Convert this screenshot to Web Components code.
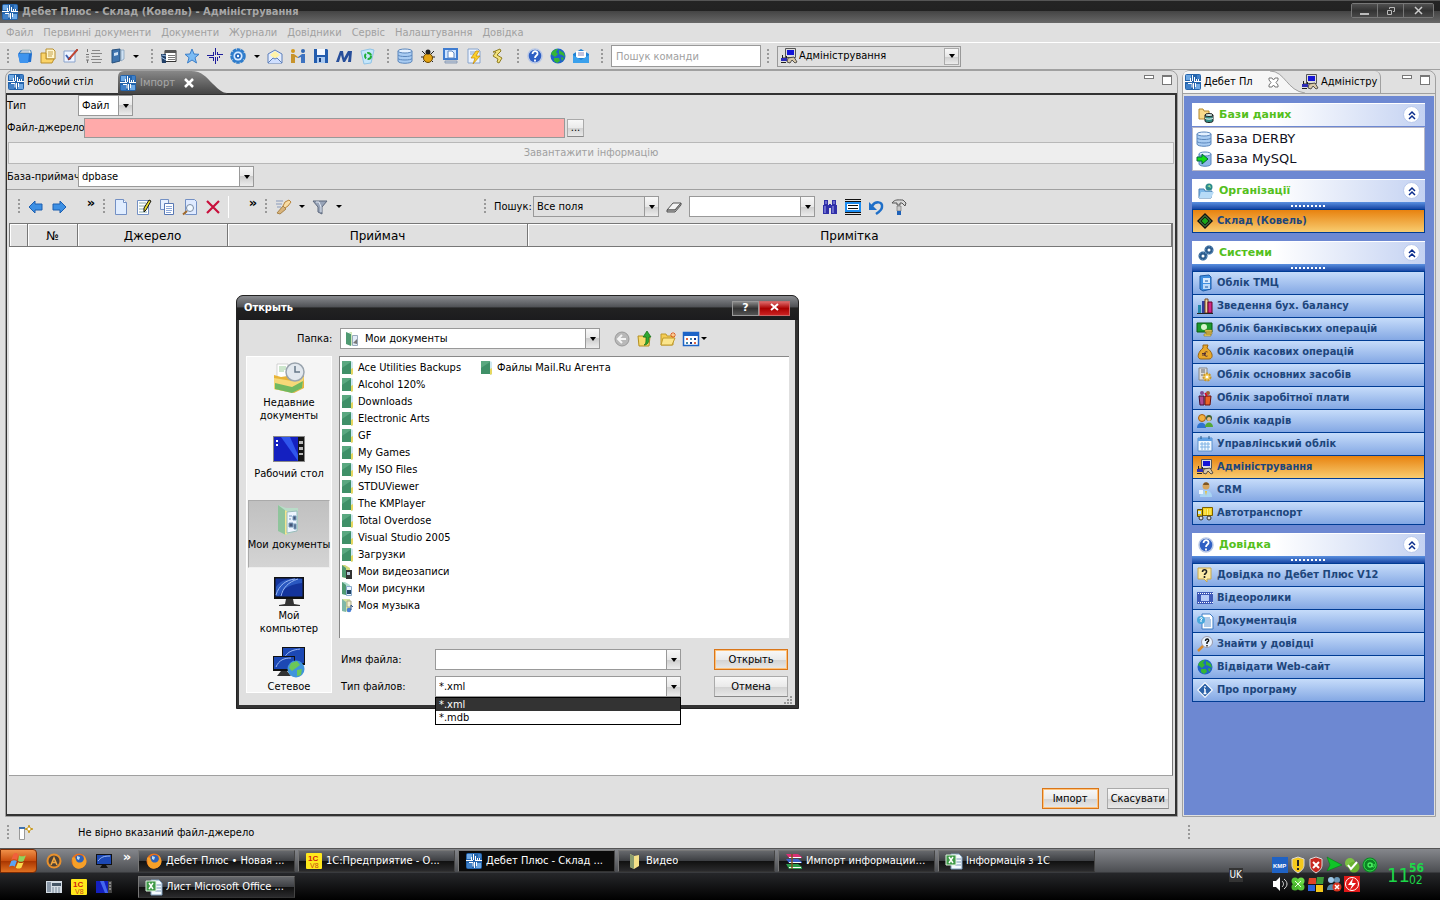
<!DOCTYPE html>
<html lang="uk">
<head>
<meta charset="utf-8">
<title>Дебет Плюс - Склад (Ковель) - Адміністрування</title>
<style>
  html { height: 100%; }
  body {
    margin: 0;
    min-height: 100%;
    display: flex;
    flex-direction: column;
    background: #e0e0e0;
    color: #000;
    font: 11px/14px "DejaVu Sans Condensed", "Noto Sans", sans-serif;
    --wide: "DejaVu Sans", sans-serif;
    --line: #a0a0a0;
    --face: #e0e0e0;
  }
  app-shell { flex: 1; }
</style>
</head>
<body>
<app-shell></app-shell>

<script>
const ICONS = {
  logo: `<rect width="16" height="16" rx="2" fill="#2464ac"/><path d="M1 1h5v5H1zM10 10h5v5h-5z" fill="#6fa9e4"/><path d="M1 10h5v5H1zM12 1h3v4h-3z" fill="#3f80c8"/><path d="M7.500 1v6M5.500 4v3M0 7.500h7M8.500 9v6M10.500 9v4M9 7.500h7M9.500 3v4M11.500 5v2M13.500 5v2M3 9.500h4v4" stroke="#fff" fill="none"/>`,
  box: `<path d="M1 6l3-4h10l1 4-1 8-11 1z" fill="#1f6fd0"/><path d="M1 6h11l-1 9H3z" fill="#3f94ee"/><path d="M3 5l2-3h8l1 3z" fill="#e8eef6" stroke="#8aa" stroke-width=".6"/><path d="M5 2v3M7 2v3M9 2v3M11 2v3" stroke="#7c93b4" stroke-width=".7"/>`,
  notes: `<path d="M6 1h7l2 2v8H6z" fill="#fff6cf" stroke="#b98f2c"/><path d="M8 4h5M8 6h5M8 8h4" stroke="#c5a24c"/><path d="M1 5h5v6h8l-2 4H1z" fill="#fbd468" stroke="#b98f2c"/>`,
  pencilPad: `<path d="M1 3h11v11H1z" fill="#eef4ff" stroke="#8aa3cc"/><path d="M3 7l3 4 2-1" stroke="#3f64b4" stroke-width="2" fill="none"/><path d="M14 1l1 1-8 9-2 1 1-2z" fill="#d8432d" stroke="#8f2312" stroke-width=".6"/>`,
  list: `<path d="M1.500 1v3M0 6.500h3M0 9h3M0 12h3M1.500 12v3" stroke="#777"/><path d="M6 2.500h8M5 5.500h11M6 8.500h8M5 11.500h11M6 14.500h9" stroke="#888"/>`,
  book: `<path d="M3 2l8-1v12l-8 2z" fill="#3f74ae" stroke="#27507c"/><path d="M5 5l4-1v3l-4 1z" fill="#cfe2f5"/><path d="M12 2h3v9l-3 2z" fill="#cfe2f5" stroke="#7a98b6" stroke-width=".7"/>`,
  grid: `<path d="M4 2.500h11v11H4z" fill="#fff" stroke="#333"/><path d="M4 2h11v3H4z" fill="#555"/><path d="M7 7.500h7M7 9.500h7M7 11.500h7" stroke="#777"/><path d="M0 6h5v9H1z" fill="#223f66"/><path d="M0 9l5 3M1 7l4 1" stroke="#9bc0e8"/>`,
  star: `<path d="M8 1l2 5 5 .3-4 3.400 1.500 5.300L8 12l-4.500 3L5 9.700 1 6.300 6 6z" fill="#7cbcf4" stroke="#3d7fc8"/>`,
  cross: `<path d="M8.500 0v7M6.500 4v3M0 7.500h7M10.500 4v3M10 6.500h6M8.500 9v7M6.500 10v3M2 9.500h5M10.500 9v4M12.500 8v2" stroke="#1c1c9c" fill="none"/>`,
  gear: `<circle cx="8" cy="8" r="6.500" fill="#3a86d6" stroke="#2f7cca" stroke-width="2.500" stroke-dasharray="3.500 .6"/><circle cx="8" cy="8" r="4.500" fill="#d6eaff"/><circle cx="8" cy="8" r="2.800" fill="#1e62b8"/><circle cx="8" cy="8" r="1.200" fill="#fff"/>`,
  mail: `<path d="M1 6l7-4 7 4v9H1z" fill="#e3edff" stroke="#5d7fb9"/><path d="M3 7l5-4 5 4-5 4z" fill="#fff3a8"/><path d="M1 15l5-5 2 1 2-1 5 5" fill="#cfdfff" stroke="#5d7fb9"/>`,
  people: `<circle cx="3" cy="3" r="2" fill="#d49a1e"/><circle cx="13" cy="3" r="2" fill="#2f66b4"/><path d="M1 6h3l4 3v1l-3-1v6H1z" fill="#c8942c"/><path d="M15 6h-3L8 9v1l3-1v6h4z" fill="#3d72c0"/>`,
  save: `<path d="M1 1h13l1 1v13H1z" fill="#235cae"/><path d="M4 1h8v6H4z" fill="#f4f8ff"/><path d="M4 9h8v6H4z" fill="#a8c8f0"/><path d="M6 10h2v4H6z" fill="#183f80"/>`,
  emm: `<path d="M0 14l4-11h3l1 7 4-7h4l-1 11h-3l1-7-4 7H7L5 7l-2 7z" fill="#274e9a"/>`,
  recycle: `<path d="M2 3l9-2 4 1-3 13-7 1z" fill="#c4e6fb" stroke="#8fc3e6"/><circle cx="9" cy="8" r="3" fill="none" stroke="#1fae36" stroke-width="2" stroke-dasharray="5 1.500"/>`,
  db: `<path d="M1 3v10c0 3 14 3 14 0V3z" fill="#a9ccf2" stroke="#5a86bc"/><ellipse cx="8" cy="3" rx="7" ry="2" fill="#e4f1ff" stroke="#5a86bc"/><path d="M1 7c1 2 13 2 14 0M1 10.500c1 2 13 2 14 0" stroke="#5a86bc" fill="none"/>`,
  bug: `<path d="M2 3l3 3M14 3l-3 3M1 9h3M15 9h-3M3 14l2-2M13 14l-2-2" stroke="#222"/><ellipse cx="8" cy="10" rx="4.500" ry="4.500" fill="#e4a414" stroke="#6b4700"/><circle cx="8" cy="4" r="2.500" fill="#222"/>`,
  screen: `<path d="M1 1h13v10H1z" fill="#cfe4ff" stroke="#3f7cd0" stroke-width="2"/><path d="M5 3h4l2 2v5H5z" fill="#fff" stroke="#5b86c4"/><path d="M2 13h12v2H2z" fill="#c4d0e0" stroke="#8c9cb4"/>`,
  flashDoc: `<path d="M2 1h10l2 2v12H2z" fill="#eaf2ff" stroke="#88a4cc"/><path d="M4 4h7M4 6h7" stroke="#88a4cc"/><path d="M10 3L5 10h4l-2 6 7-8h-4l3-5z" fill="#fbd12c" stroke="#c48a0a" stroke-width=".7"/>`,
  scroll: `<path d="M4 4l7-3 1 2-4 4 5 3-3 5-2-1 1-3-5-3 3-4z" fill="#f3e27c" stroke="#8f7d22"/>`,
  help: `<circle cx="8" cy="8" r="7" fill="#2f5fc4" stroke="#b9c8e6" stroke-width="1.500"/><path d="M5.500 6c0-4 5.500-3.500 5 0-.3 1.600-2.500 1.500-2.500 4M8 11.500v2" stroke="#fff" stroke-width="1.800" fill="none"/>`,
  globe: `<circle cx="8" cy="8" r="7.500" fill="#1f62c8"/><path d="M1 6c2-5 6-5 7-5l-2 3 2 2-3 3zM9 2l5 3 1 4-3-2-3-1zM4 10l5 0 1 3-3 2-3-2zM11 9l3 1-2 3z" fill="#35b535"/>`,
  mailDoc: `<path d="M0 6l8-5 8 5v9H0z" fill="#1f82d4"/><path d="M3 3h10v7H3z" fill="#fff"/><path d="M5 5h6M5 7h6" stroke="#88b"/><path d="M0 7l8 5 8-5v8H0z" fill="#3aa0ec"/>`,
  admin: `<path d="M4.500.500h10v9h-10z" fill="#ddd" stroke="#555"/><path d="M6 2h7v5H6z" fill="#1414d6"/><path d="M1.500 7v3h4v-2" stroke="#222" fill="none"/><path d="M0 10h6v3H0z" fill="#2c2cb4"/><path d="M7 10l6-1 3 5-2 1-3-3-2 3-3-1z" fill="#d8c8a8" stroke="#333" stroke-width=".8"/><path d="M0 14.500h5" stroke="#222"/>`,
  back: `<path d="M1 8l6-6v3h7v6H7v3z" fill="#3d90e4" stroke="#1c5fb0"/>`,
  forward: `<path d="M15 8L9 2v3H2v6h7v3z" fill="#3d90e4" stroke="#1c5fb0"/>`,
  page: `<path d="M2.500.5h8l3 3v12h-11z" fill="#e0edff" stroke="#7390c4"/><path d="M10.500.5v3h3" fill="#fff" stroke="#7390c4"/>`,
  edit: `<path d="M1.500 1.500h11v14h-11z" fill="#fff" stroke="#7390c4"/><path d="M3 4h7M3 7h6M3 10h7M3 13h8" stroke="#8aa"/><path d="M13 1l2 1-5 9-2 2V9z" fill="#eadf2c" stroke="#111"/>`,
  copy: `<path d="M1.500.5h8v10h-8z" fill="#e8f1ff" stroke="#7390c4"/><path d="M5.500 4.500h9v11h-9z" fill="#fff" stroke="#5878b4"/><path d="M7 7.500h6M7 9.500h6M7 11.500h6M7 13.500h5" stroke="#8aa6d8"/>`,
  preview: `<path d="M3.500.5h9l2 2v13h-11z" fill="#dfeaff" stroke="#7390c4"/><circle cx="8" cy="9" r="3.500" fill="#f2f9ff" stroke="#7a8ba4"/><path d="M5 12l-4 3.500" stroke="#a06a2c" stroke-width="2"/>`,
  del: `<path d="M2 2l12 12M14 2L2 14" stroke="#c8103c" stroke-width="2.200"/>`,
  torch: `<path d="M10 3l4-2 2 2-3 4-3 2-2-2z" fill="#f8dca4" stroke="#b8843c"/><path d="M8 7l3 3-6 5-3-1z" fill="#d9b47c" stroke="#a7834a"/><path d="M1 2h7M1 5h6M2 8h4" stroke="#8899bb"/>`,
  filter: `<path d="M1 2h14l-5 6v7l-4-2V8z" fill="#98a4b8" stroke="#5d687c"/><path d="M4 3h3l2 5v5" stroke="#e4eaf4" fill="none"/>`,
  eraser: `<path d="M1 11l6-7h8l-6 7z" fill="#f4f4f4" stroke="#555"/><path d="M1 11v2h8l6-7V4l-6 7z" fill="#bbb" stroke="#555"/>`,
  find: `<path d="M2 1h4v5H2zM10 1h4v5h-4zM1 6h6v9H1zM9 6h6v9H9zM7 5h2v4H7z" fill="#3030a8"/><path d="M3 7v7M11 7v7M4 2v3M12 2v3" stroke="#a8a8f4"/>`,
  rows: `<path d="M0 .500h16M0 15.500h16" stroke="#111"/><path d="M1 4h14v8H1z" fill="#fff" stroke="#1c8cf0" stroke-width="2"/><path d="M0 2.500h16M0 13.500h16M3 6.500h10M3 9.500h10" stroke="#111"/>`,
  undo: `<path d="M4 7c3-5 11-5 10 1 0 3-3 5-6 7" stroke="#1f6fc8" stroke-width="2.500" fill="none"/><path d="M1 3v8h8z" fill="#1f6fc8"/>`,
  hammer: `<path d="M1 4c3-4 6-3 11-3l3 3-1 3-3-3H9v2H6V4z" fill="#d8d8d8" stroke="#555"/><path d="M6 7h4v5H6z" fill="#ccc" stroke="#666" stroke-width=".6"/><path d="M6 12h4v4H6z" fill="#1f62b8"/>`,
  bases: `<path d="M1 2h4l1 2h5v8H1z" fill="#f8d98a" stroke="#b38728"/><path d="M7 8v6c0 2 8 2 8 0V8z" fill="#2f8f86" stroke="#222"/><ellipse cx="11" cy="8" rx="4" ry="1.500" fill="#d6f2ee" stroke="#222"/><path d="M7 11c1 1.500 7 1.500 8 0" stroke="#fff" fill="none"/>`,
  dbArrow: `<path d="M3 3v10c0 3 12 3 12 0V3z" fill="#8db8e8" stroke="#5a86bc"/><ellipse cx="9" cy="3" rx="6" ry="2" fill="#e4f1ff" stroke="#5a86bc"/><path d="M1 6h5V3l6 5-6 5v-3H1z" fill="#16dd16" stroke="#064"/>`,
  orgs: `<path d="M1 6h5l1 2h7l-1 7H1z" fill="#7db8e8" stroke="#4a7fb0"/><path d="M3 9h13l-3 6H1z" fill="#b7dbf7"/><circle cx="11" cy="4" r="3.500" fill="#2a8a8a"/><path d="M9 3l3-1 1 3z" fill="#9fe0a0"/>`,
  diamond: `<path d="M8 0l8 8-8 8-8-8z" fill="#111"/><path d="M8 2.500L13.500 8 8 13.500 2.500 8z" fill="none" stroke="#5a5"/><path d="M8 4.500L11.500 8 8 11.500 4.500 8z" fill="#18a818"/>`,
  gears: `<circle cx="5" cy="11" r="3" fill="none" stroke="#2d5c8c" stroke-width="3"/><circle cx="11" cy="5" r="3" fill="none" stroke="#2d5c8c" stroke-width="3"/><circle cx="5" cy="11" r="4" fill="none" stroke="#7fb0dc" stroke-dasharray="1.500 1.500"/><circle cx="11" cy="5" r="4" fill="none" stroke="#7fb0dc" stroke-dasharray="1.500 1.500"/>`,
  cabinet: `<path d="M3 1l9-1 2 2v12l-8 2-3-2z" fill="#3f8fe0" stroke="#1b5aa8"/><path d="M6 3h7v5H6z" fill="#d8ebff"/><path d="M6 9h7v5H6z" fill="#bcd9f8"/><path d="M8 6h3M8 12h3" stroke="#1b5aa8"/>`,
  chart: `<path d="M1 7h3v8H1z" fill="#28a" /><path d="M5 3h3v12H5z" fill="#323c9c"/><path d="M8 1h3v14H8z" fill="#f0d8a0" stroke="#742"/><path d="M11 4h4v11h-4z" fill="#d02a8a" stroke="#602"/><path d="M0 15.500h16" stroke="#222"/>`,
  money: `<path d="M0 2h15v9H0z" fill="#1c9a2c" stroke="#0a5a14"/><circle cx="7" cy="6" r="3" fill="#d8f4cc"/><path d="M8 9h7v2H8zM9 11h6v2H9zM7 13h7v2H7z" fill="#f4dc70" stroke="#8a6c10" stroke-width=".6"/>`,
  bag: `<path d="M6 1h5l-1 3c7 5 6 11 2 11H4C0 15 0 9 6 4z" fill="#e8a82c" stroke="#9a6410"/><path d="M10.500 8c-4-2-4 6 0 4M5 9.500h4M5 11h4" stroke="#533" fill="none"/>`,
  assets: `<path d="M2 1h8v12H2z" fill="#ddd" stroke="#888"/><path d="M4 3h4M4 5h4M4 8h2" stroke="#666"/><circle cx="10" cy="10" r="3.500" fill="#f6cf62" stroke="#c9962a" stroke-width="2" stroke-dasharray="2 1"/><circle cx="10" cy="10" r="1.300" fill="#fff"/>`,
  salary: `<circle cx="5" cy="3" r="2" fill="#7a4a90"/><circle cx="11" cy="3" r="2" fill="#a06030"/><path d="M2 6h5v9H3z" fill="#b04890" stroke="#413"/><path d="M8 6h6l-1 9H8z" fill="#e86424" stroke="#611"/><path d="M8 3l2 3" stroke="#d02" stroke-width="1.500"/>`,
  staff: `<circle cx="5" cy="5" r="3.500" fill="#f0b040" stroke="#a45c10"/><circle cx="12" cy="5" r="3" fill="#3f6030"/><circle cx="12" cy="6" r="2" fill="#f0c080"/><path d="M0 15c0-7 9-7 9 0z" fill="#2f74d0"/><path d="M8 14c0-6 8-6 8 0z" fill="#54a838"/>`,
  calendar: `<path d="M1 2h14v13H1z" fill="#f2f9ff" stroke="#5a90cc"/><path d="M1 2h14v3H1z" fill="#5fa0e4"/><path d="M3 8h10M3 11h10M5 6v8M8 6v8M11 6v8" stroke="#7fb2e4"/><path d="M4 0v3M12 0v3" stroke="#24588c"/>`,
  crm: `<circle cx="9" cy="4" r="3.500" fill="#d6a45c"/><path d="M6 3c1-4 6-3 6 0z" fill="#7c5424"/><path d="M3 15c0-9 12-9 12 0z" fill="#a8d4f4"/><path d="M8 9l1 5 1-5z" fill="#e8c040"/><path d="M2 8h4v4H2z" fill="#e8f4ff"/>`,
  truck: `<path d="M5.500 2.500h10v8h-10z" fill="#f4d020" stroke="#7a6000"/><path d="M8 4v6M10.500 4v6M13 4v6" stroke="#fff27c"/><path d="M.500 4.500h5v7h-5z" fill="#e0bc10" stroke="#5a4800"/><path d="M1 6h3v3H1z" fill="#bfe4ff"/><circle cx="4" cy="13" r="2" fill="#ddd" stroke="#333"/><circle cx="12" cy="13" r="2" fill="#ddd" stroke="#333"/>`,
  note: `<path d="M1 1h13v11h-4v3l-3-3H1z" fill="#fbe9a6" stroke="#c9a84c"/><path d="M5.500 5c0-3 4.500-3 4 0 0 1.500-2 1.500-2 3M7.500 9v2" stroke="#222" stroke-width="1.600" fill="none"/>`,
  film: `<path d="M0 2h16v12H0z" fill="#3f5ab8"/><path d="M4 5h8v6H4z" fill="#b8ccf8"/><path d="M1 3.500h15M1 12.500h15" stroke="#fff" stroke-dasharray="1 1"/>`,
  docHelp: `<path d="M5 1h8l3 3v12H5z" fill="#fff" stroke="#3f7cc4"/><path d="M7 5h6M7 7h7M7 9h7M7 11h7M7 13h7" stroke="#5a94d4"/><circle cx="4" cy="7" r="4" fill="#4aa8dc"/><path d="M3 6c0-2 3-2 2 0L4 7v2" stroke="#fff" fill="none"/>`,
  search: `<circle cx="10" cy="6" r="5.500" fill="#eaf4ff" stroke="#99a"/><path d="M8.500 5c0-3 4-2.500 3 0l-1.500 1.500V8M10 9v1.500" stroke="#111" stroke-width="1.400" fill="none"/><path d="M6 10l-5 5" stroke="#d88a2c" stroke-width="2.500"/>`,
  info: `<path d="M8 0l8 8-8 8-8-8z" fill="#fff"/><path d="M8 1.500L14.500 8 8 14.500 1.500 8z" fill="#2c62a8"/><path d="M8 4v1.500M8 7v4M6.500 11.500h3M7 7h1" stroke="#fff" stroke-width="1.500"/>`,
  newView: `<path d="M2.500 2.500h5v12h-5z" fill="#fff" stroke="#999"/><path d="M2 2h6v2H2z" fill="#3f72ac"/><path d="M12 0l1 3 3 1-3 1-1 3-1-3-3-1 3-1z" fill="#fff" stroke="#c89a20"/>`,
  myDocs: `<path d="M2 1l5 2v12l-5-2z" fill="#4f9a72"/><path d="M5 1h3v13l-1 1V3z" fill="#cfe8b8"/><path d="M8.500 4.500h5v10h-5z" fill="#e3ecf8" stroke="#9ab"/><path d="M9 12l4-4v5z" fill="#777"/>`,
  goBack: `<circle cx="8" cy="8" r="7" fill="#b8b8b8" stroke="#999"/><path d="M4 8h8M8 4L4 8l4 4" stroke="#f4f4f4" stroke-width="2" fill="none"/>`,
  goUp: `<path d="M1 5h5l1 1h6l-1 9H2z" fill="#f6dc6c" stroke="#b48e20"/><path d="M7 14c2-1 2-3 2-8H6l4-6 4 6h-2c0 5-1 8-5 8z" fill="#2fa82f" stroke="#0f6a14" stroke-width=".7"/>`,
  newFolder: `<path d="M1 3h5l1 2h6v9H1z" fill="#f4cc54" stroke="#c09a2c"/><path d="M3 7h12l-3 7H1z" fill="#fbe58c" stroke="#c09a2c"/><path d="M13 1v6M10 4h6M11 2l4 4M15 2l-4 4" stroke="#e4601c"/><circle cx="13" cy="4" r="1.300" fill="#fc8"/>`,
  views: `<path d="M.5 1.500h15v13H.5z" fill="#fff" stroke="#1c64c8" stroke-width="1.500"/><path d="M0 1h16v4H0z" fill="#1c64c8"/><path d="M3 7h2v2H3zM11 11h2v2h-2z" fill="#d64"/><path d="M7 7h2v2H7zM3 11h2v2H3z" fill="#48a"/><path d="M11 7h2v2h-2zM7 11h2v2H7z" fill="#138"/>`,
  folder: `<path d="M2 1h9v13H2z" fill="#3f9068"/><path d="M2 1h9v1L2 8z" fill="#5aa880"/><path d="M11 1l2 1v13l-2-1z" fill="#cfe8f0"/><path d="M11 9l2-1v6l-2 1z" fill="#e6d860"/>`,
  folderVideo: `<path d="M2 1h3l5 3v11l-8-2z" fill="#d0d878"/><path d="M2 1l4 3v10l-4-1z" fill="#4f9a72"/><path d="M6 6h6v9H6z" fill="#333"/><path d="M7 8h3v3H7z" fill="#bcd"/>`,
  folderPics: `<path d="M2 1h3l5 3v11l-8-2z" fill="#b0dcd0"/><path d="M2 1l4 3v10l-4-1z" fill="#4f9a72"/><path d="M6.500 5.500h5v9h-5z" fill="#eaf4ff" stroke="#8ac"/><path d="M7 9h4v4H7z" fill="#246"/>`,
  folderMusic: `<path d="M2 1h8v13l-8-1z" fill="#d8e4a0"/><path d="M2 1l4 3v10l-4-1z" fill="#7fb8a8"/><path d="M7 3h4v6H7z" fill="#f4f0d0" stroke="#aa8"/><circle cx="9" cy="12" r="2.300" fill="#4a80d8"/><path d="M11 12V7l2 2" stroke="#358" fill="none"/>`,
  recent: `<path d="M4 2h11v14H4z" fill="#fff" stroke="#bbb" stroke-width=".6"/><path d="M6 5h7M6 7h7M6 9h5" stroke="#9c9"/><path d="M1 13l7 2 13-2 10-1v14l-10 5-20-4z" fill="#e8b438"/><path d="M1 16l18 3 12-4-2 11-10 5-18-4z" fill="#f5d878"/><path d="M2 21l17 4 11-6-1 7-10 5-17-4z" fill="#70b860"/><circle cx="22" cy="10" r="9" fill="#e2e8ee" stroke="#9aa4ae" stroke-width="1.500"/><path d="M22 4v6h5" stroke="#678" stroke-width="1.500" fill="none"/>`,
  desktop: `<path d="M0 3h32v26H0z" fill="#888"/><path d="M1 4h24v24H1z" fill="#1420c0"/><path d="M8 4h9l8 18v6z" fill="#2f55ec"/><path d="M3 7h2v2H3zM3 11h2v2H3z" fill="#fff"/><path d="M25 4h6v24h-6z" fill="#151515"/><path d="M26 8h4v3h-4zM26 14h4v3h-4zM26 20h4v2h-4z" fill="#bbb"/>`,
  docsBig: `<path d="M5 1l8 3h12v22l-11 5-9-4z" fill="#b9dcc8"/><path d="M5 1l8 6v24l-8-4z" fill="#8fc49c"/><path d="M12 6l3 2v21l-3 2z" fill="#f3e690"/><path d="M14 8l10-1v20l-10 2z" fill="#edf4ff" stroke="#9bb"/><path d="M16 12h3M16 15h2M20 12h3v4h-3zM16 19h4v4h-4zM21 20h2v5h-2z" stroke="#7799bb" fill="#457"/>`,
  pc: `<path d="M1 2h30v22H1z" fill="#111"/><path d="M2.500 3.500h27v18h-27z" fill="#14349c"/><path d="M3 12C8 4 18 3 29 4v4C20 9 10 12 6 21H3z" fill="#2a58c0"/><path d="M3 20C6 10 13 5 22 4M8 21C10 13 15 7 25 4" stroke="#9ab8f4" fill="none"/><path d="M13 24h7l1 5 6 1v1H6v-1l6-1z" fill="#333"/>`,
  network: `<path d="M9 1h23v18H9z" fill="#111"/><path d="M10 2h21v15H10z" fill="#1c48b4"/><path d="M11 12C15 5 20 4 27 3" stroke="#9ab8f4" fill="none"/><path d="M0 10h22v15H0z" fill="#111"/><path d="M1 11h20v12H1z" fill="#1c48b4"/><path d="M3 21C6 14 11 12 18 12" stroke="#9ab8f4" fill="none"/><path d="M8 25h6l4 5H4z" fill="#333"/><circle cx="23" cy="23" r="8.500" fill="#3f94dc"/><path d="M18 17l6-2 3 4-4 3-4 3-3-3zM24 24l5-1-1 6-4 1z" fill="#6cc858"/>`,
  winamp: `<circle cx="8" cy="8" r="7.500" fill="#e8902c"/><circle cx="8" cy="8" r="5.500" fill="#4c4238"/><path d="M5 12l3-7 3 7M6 9.500h4" stroke="#f4a840" stroke-width="1.600" fill="none"/>`,
  firefox: `<circle cx="8" cy="8" r="7.500" fill="#e8701c"/><circle cx="8.500" cy="6.500" r="4.500" fill="#2f62b8"/><path d="M1 5c2-2 4 0 4 2 1 3 4 3 6 2 3-2 2-5 1-7 3 2 4 6 3 9-3 6-11 6-13 1z" fill="#f6a028"/><path d="M6 3l3 1-1 3-2-1z" fill="#bcdcf4"/>`,
  showDesk: `<path d="M0 1h16v11H0z" fill="#111"/><path d="M1 2h14v9H1z" fill="#1c48b4"/><path d="M2 8c3-4 6-5 12-5" stroke="#9ab8f4" fill="none"/><path d="M6 12h4l2 3H4z" fill="#111"/>`,
  phone: `<path d="M0 2h16v12H0z" fill="#d4dce4"/><path d="M1 3h4v10H1z" fill="#8a98a8"/><path d="M6 4h9v3H6z" fill="#456"/><path d="M6 9h9M6 11h9M6 13h9" stroke="#789" stroke-dasharray="2 1"/>`,
  onec: `<rect width="16" height="16" rx="1" fill="#ffe81c"/><text x="2" y="8" font-size="8" font-weight="700" fill="#d01c10" font-family="Liberation Sans">1С</text><text x="4" y="15" font-size="7" fill="#c84818" font-family="Liberation Sans">V8</text>`,
  deskMini: `<path d="M0 2h16v12H0z" fill="#1420c0"/><path d="M4 2h4l4 12H9z" fill="#4468f0"/><path d="M12 2h4v12h-4z" fill="#444"/><path d="M13 4h2M13 7h2M13 10h2" stroke="#ccc"/>`,
  excel: `<path d="M5 1h8l3 3v12H5z" fill="#f4faff" stroke="#7a9ab8"/><path d="M9 6h6M9 9h6M9 12h6" stroke="#7a9ab8"/><path d="M0 2h10v10H0z" fill="#3f9a48" stroke="#dff0df"/><path d="M3 4l4 6M7 4l-4 6" stroke="#fff" stroke-width="1.500"/>`,
  folderYellow: `<path d="M4 1l4 2 5-1v11l-5 3-4-2z" fill="#f4e088"/><path d="M4 1l4 2v13l-4-2z" fill="#8a9c70"/>`,
  rar: `<path d="M0 1h12l4 3v1H3z" fill="#d83074"/><path d="M0 6h12l4 3v1H3z" fill="#3c62c8"/><path d="M0 11h12l4 3v2H3z" fill="#2c9a4c"/><path d="M3 4.500h12M3 9.500h12M3 14.500h12" stroke="#fff"/><path d="M6 1v15" stroke="#805020" stroke-width="1.500"/>`,
  start: `<path d="M4 2c2-2 3-1 4 0L7 7C5 6 4 6 2 7z" fill="#f0603c"/><path d="M9 3c2 1 3 1 6 0l-2 5c-2 1-3 1-5 0z" fill="#90d45c"/><path d="M2 8c2-1 3-1 5 0l-2 5c-1-1-3-1-5 0z" fill="#5ca4f4"/><path d="M8 9c2 1 3 1 5 0l-2 5c-2 1-3 1-5 0z" fill="#fcd84c"/>`,
  kmp: `<rect width="16" height="16" fill="#1f62c4"/><text x="1" y="11" font-size="6" font-weight="700" fill="#fff" font-family="Liberation Sans">KMP</text>`,
  shieldY: `<path d="M8 0l6 2v6c0 4-3 6-6 8-3-2-6-4-6-8V2z" fill="#f4c81c" stroke="#d8d8d8"/><path d="M8 3v6M8 11v2" stroke="#222" stroke-width="2"/>`,
  shieldR: `<path d="M8 0l6 2v6c0 4-3 6-6 8-3-2-6-4-6-8V2z" fill="#c82820" stroke="#ddd"/><path d="M5 5l6 6M11 5l-6 6" stroke="#fff" stroke-width="2"/>`,
  play: `<path d="M1 0l15 8-15 6 3-6z" fill="#10c428" stroke="#0a7a18" stroke-width=".6"/>`,
  okGreen: `<circle cx="6" cy="6" r="5" fill="#7cc444"/><circle cx="10" cy="10" r="5.500" fill="#68b030"/><path d="M4 8l3 4 6-7" stroke="#fff" stroke-width="2" fill="none"/>`,
  agent: `<circle cx="8" cy="8" r="7.500" fill="#0c8424"/><circle cx="8" cy="8" r="6" fill="none" stroke="#38d850"/><circle cx="8" cy="8" r="2" fill="none" stroke="#48f060" stroke-width="1.300"/><path d="M10 6v3c1 2 3 1 2-2" stroke="#48f060" fill="none"/>`,
  sound: `<path d="M1 5h3l4-4v14l-4-4H1z" fill="#fff"/><path d="M10 5c2 2 2 4 0 6M12 3c4 3 4 7 0 10" stroke="#ddd" fill="none"/>`,
  clover: `<circle cx="5" cy="5" r="3.500" fill="#58c838"/><circle cx="11" cy="5" r="3.500" fill="#6cdc48"/><circle cx="5" cy="11" r="3.500" fill="#48b42c"/><circle cx="11" cy="11" r="3.500" fill="#58c838"/><path d="M5 5l6 6M11 5l-6 6" stroke="#eaffdf"/>`,
  flag: `<path d="M1 2h7v6H0z" fill="#e04428"/><path d="M9 1h7l-1 7H8z" fill="#3c9a38"/><path d="M0 9h7v6H0z" fill="#2c62d8"/><path d="M8 9h7v7H8z" fill="#f4c81c"/>`,
  netOff: `<circle cx="5" cy="4" r="3" fill="#9fc8e8"/><circle cx="11" cy="4" r="3" fill="#6a98b8"/><path d="M1 14c0-7 8-7 9-3v3z" fill="#5888a8"/><circle cx="11" cy="11" r="4.500" fill="#d83420"/><path d="M9 9l4 4M13 9l-4 4" stroke="#fff" stroke-width="1.500"/>`,
  flash: `<rect width="16" height="16" fill="#e01818"/><circle cx="8" cy="8" r="6.500" fill="none" stroke="#fff"/><path d="M9 2L4 9h4l-2 5 6-7H8z" fill="#fff"/>`,
  dots: `<path d="M7 1h2v2H7zM4 4h2v2H4zM7 4h2v2H7zM1 7h2v2H1zM4 7h2v2H4zM7 7h2v2H7z" fill="#999"/>`
};

const controls = `
  button, input, select { font: inherit; color: inherit; margin: 0; box-sizing: border-box; border-radius: 0; }
  .push {
    border: 1px solid #aaa; border-bottom-color: #888;
    background: linear-gradient(#f8f8f8, #eaeaea 50%, #d2d2d2 50%, #e8e8e8);
    padding: 0 3px; height: 21px;
  }
  .push.default { border: 1px solid #d9761a; box-shadow: inset 0 0 0 1px #ffc27a; }
`;

class BaseElement extends HTMLElement {
  constructor() {
    super();
    this.attachShadow({ mode: 'open' });
  }
  connectedCallback() {
    const template = document.createElement('template');
    template.innerHTML = `<style>${this.styles()}</style>${this.markup()}`;
    this.shadowRoot.replaceChildren(template.content.cloneNode(true));
  }
  styles() { return ':host { display: block; }'; }
  markup() { return '<slot></slot>'; }
}

class DpIcon extends BaseElement {
  styles() {
    return `
      :host { display: block; flex: none; width: var(--size, 16px); height: var(--size, 16px); }
      svg { display: block; width: 100%; height: 100%; overflow: visible; }
    `;
  }
  markup() {
    const box = this.getAttribute('box') || 16;
    return `<svg viewBox="0 0 ${box} ${box}" aria-hidden="true">${ICONS[this.getAttribute('name')] || ''}</svg>`;
  }
}
customElements.define('dp-icon', DpIcon);

class ToolGroup extends BaseElement {
  styles() {
    return `
      :host { display: flex; align-items: center; gap: 7px; }
      i { width: 3px; height: 15px; background: radial-gradient(circle at 1px 1px, #999 1px, transparent 1px) 0 0 / 3px 4px; }
    `;
  }
  markup() { return '<i></i><slot></slot>'; }
}
customElements.define('tool-group', ToolGroup);

class ToolButton extends BaseElement {
  styles() {
    return `
      :host { display: block; }
      button { display: block; border: 0; padding: 0; background: none; color: inherit; font: inherit; }
      .caret { width: 7px; height: 16px; display: grid; place-items: center; }
      .caret::before { content: ""; border: 3px solid transparent; border-top-color: #000; border-bottom: 0; }
      .more { width: 12px; font: bold 13px/12px "DejaVu Sans", sans-serif; padding-bottom: 8px; }
    `;
  }
  markup() {
    const icon = this.getAttribute('icon');
    if (icon === 'caret') return '<button class="caret" aria-label="Меню"></button>';
    if (icon === 'more') return '<button class="more">»</button>';
    return `<button aria-label="${icon}"><dp-icon name="${icon}"></dp-icon></button>`;
  }
}
customElements.define('tool-button', ToolButton);

const tools = (names) => names.split(' ').map((n) => `<tool-button icon="${n}"></tool-button>`).join('');

// drop-down or editable combo, with its own label
class UiCombo extends BaseElement {
  styles() {
    return `${controls}
      :host { display: flex; align-items: center; }
      label { flex: none; width: var(--label-width, auto); white-space: nowrap; }
      .box { flex: 1; min-width: 0; display: grid; grid-template-columns: minmax(0, 1fr) 14px; height: 21px; border: 1px solid #999; background: var(--field, #fff); box-sizing: border-box; }
      select, input { grid-area: 1 / 1 / 2 / 3; width: 100%; height: 100%; border: 0; padding: 0 18px 0 var(--indent, 3px); background: none; appearance: none; outline: 0; }
      .arrow { grid-area: 1 / 2; pointer-events: none; border-left: 1px solid #999; background: linear-gradient(#f8f8f8, #e8e8e8 50%, #ccc 50%, #ececec); display: grid; place-items: center; }
      .arrow::before { content: ""; border: 3px solid transparent; border-top: 4px solid #000; border-bottom: 0; }
      :host([framed]) .arrow { border: 1px solid #aaa; margin: 1px; }
      :host([framed]) .box { grid-template-columns: minmax(0, 1fr) 17px; }
      dp-icon { grid-area: 1 / 1; align-self: center; margin-left: 3px; }
    `;
  }
  markup() {
    const label = this.getAttribute('label');
    const hidden = this.hasAttribute('bare');
    const options = (this.getAttribute('options') || '').split('|');
    const icon = this.getAttribute('icon');
    const name = hidden ? `aria-label="${label}"` : '';
    return `
      ${hidden ? '' : `<label for="field">${label}</label>`}
      <span class="box">
        ${this.hasAttribute('editable')
          ? `<input id="field" type="text" ${name}>`
          : `<select id="field" ${name}>${options.map((o) => `<option>${o}</option>`).join('')}</select>`}
        ${icon ? `<dp-icon name="${icon}"></dp-icon>` : ''}
        <span class="arrow"></span>
      </span>
    `;
  }
}
customElements.define('ui-combo', UiCombo);

class TitleBar extends BaseElement {
  styles() {
    return `
      :host { display: flex; align-items: center; gap: 4px; height: 23px; padding: 0 6px 0 2px; box-sizing: border-box;
        background: linear-gradient(#555 1px, #242424 1px, #222 11px, #444 11px, #686868); color: #a6a6a6; }
      h1 { flex: 1; margin: 0; font: bold 11px/14px "DejaVu Sans Condensed", "Noto Sans", sans-serif; }
      .buttons { display: flex; border: 1px solid #777; border-radius: 2px; margin-top: -2px; }
      button { width: 26px; height: 13px; padding: 0; border: 0; border-right: 1px solid #777; background: linear-gradient(#505050, #333 50%, #484848); }
      button:last-child { width: 29px; border: 0; }
      svg { display: block; margin: auto; }
    `;
  }
  markup() {
    return `
      <dp-icon name="logo"></dp-icon>
      <h1><slot></slot></h1>
      <div class="buttons">
        <button aria-label="Згорнути"><svg width="10" height="10"><path d="M0 8h9" stroke="#bbb" stroke-width="2"/></svg></button>
        <button aria-label="Відновити"><svg width="8" height="8"><path d="M2.500 2V.5h5v4H6M.5 3.500h4v4h-4z" fill="none" stroke="#bbb"/></svg></button>
        <button aria-label="Закрити"><svg width="9" height="9"><path d="M1 1l7 7M8 1L1 8" stroke="#ccc" stroke-width="1.500"/></svg></button>
      </div>
    `;
  }
}
customElements.define('title-bar', TitleBar);

class MenuBar extends BaseElement {
  styles() {
    return `
      :host { display: flex; gap: 10px; height: 20px; padding: 2px 6px; box-sizing: border-box; color: #a0a0a0; border-bottom: 1px solid #fff; }
      button { border: 0; padding: 0; background: none; font: inherit; color: inherit; }
    `;
  }
  markup() {
    return ['Файл', 'Первинні документи', 'Документи', 'Журнали', 'Довідники', 'Сервіс', 'Налаштування', 'Довідка']
      .map((t) => `<button>${t}</button>`).join('');
  }
}
customElements.define('menu-bar', MenuBar);

class MainToolbar extends BaseElement {
  styles() {
    return `${controls}
      :host { display: flex; align-items: center; gap: 12px; height: 27px; padding: 0 7px; box-sizing: border-box; border-bottom: 1px solid var(--line); }
      input { width: 150px; height: 22px; border: 1px solid #999; padding: 0 4px; background: #fff; }
      input::placeholder { color: #a0a0a0; opacity: 1; }
      .command { margin-right: -6px; }
      ui-combo { width: 184px; --indent: 21px; --field: #e0e0e0; }
    `;
  }
  markup() {
    return `
      <tool-group>${tools('box notes pencilPad list book caret')}</tool-group>
      <tool-group>${tools('grid star cross gear caret mail people save emm recycle')}</tool-group>
      <tool-group>${tools('db bug screen flashDoc scroll')}</tool-group>
      <tool-group>${tools('help globe mailDoc')}</tool-group>
      <tool-group class="command"><input type="text" placeholder="Пошук команди" aria-label="Пошук команди"></tool-group>
      <tool-group><ui-combo bare framed icon="admin" label="Система" options="Адміністрування"></ui-combo></tool-group>
    `;
  }
}
customElements.define('main-toolbar', MainToolbar);

class PaneButtons extends BaseElement {
  styles() {
    return `
      :host { display: flex; gap: 8px; margin: 4px 5px 0 auto; }
      button { padding: 0; border: 1px solid #777; background: #fff; width: 10px; height: 10px; }
      .min { height: 4px; }
      .max { border-top-width: 2px; }
    `;
  }
  markup() { return '<button class="min" aria-label="Згорнути"></button><button class="max" aria-label="Розгорнути"></button>'; }
}
customElements.define('pane-buttons', PaneButtons);

class EditorPane extends BaseElement {
  styles() {
    return `
      :host { display: flex; flex-direction: column; border: 1px solid var(--line); border-radius: 8px 8px 0 0; }
      header { display: flex; height: 22px; }
      button { display: flex; align-items: center; gap: 3px; border: 0; padding: 0 2px; background: none; font: inherit; color: inherit; }
      .first { width: 112px; }
      .active { width: 109px; height: 23px; gap: 4px; background: linear-gradient(#888, #444); color: #a8a8a8;
        clip-path: path("M0 24V6Q0 0 6 0H73C84 0 88 6 95 13C101 19 105 22 109 22V24Z"); }
      .active svg { margin-left: 5px; }
      .body { flex: 1; display: flex; flex-direction: column; border: 2px solid #333; border-left-width: 1px; }
    `;
  }
  markup() {
    return `
      <header>
        <button class="first"><dp-icon name="logo"></dp-icon>Робочий стіл</button>
        <button class="active"><dp-icon name="logo"></dp-icon>Імпорт<svg width="10" height="10"><path d="M1 1l8 8M9 1L1 9" stroke="#fff" stroke-width="2.500"/></svg></button>
        <pane-buttons></pane-buttons>
      </header>
      <div class="body"><slot></slot></div>
    `;
  }
}
customElements.define('editor-pane', EditorPane);

class ImportForm extends BaseElement {
  styles() {
    return `${controls}
      :host { flex: 1; display: flex; flex-direction: column; }
      .form { display: flex; flex-direction: column; border-bottom: 1px solid var(--line); padding-bottom: 2px; --label-width: 71px; }
      .type { width: 126px; }
      .source { display: flex; align-items: center; gap: 2px; height: 24px; }
      .source input { width: 481px; height: 20px; border: 1px solid #999; background: #ffaaaa; }
      .source label { width: 75px; white-space: nowrap; }
      .source .push { width: 17px; height: 18px; padding: 0; }
      .load { margin: 2px 1px; color: #a0a0a0; background: #eee; border: 1px solid #b8b8b8; height: 22px; }
      .base { width: 247px; }
      .tools { display: flex; align-items: center; height: 33px; padding: 0 11px; gap: 10px; }
      .tools .wide { flex: 0 1 122px; }
      .tools tool-button[icon=more] { margin: 0 -4px 0 11px; }
      hr { margin: 0 -3px; width: 1px; height: 22px; border: 0; background: #fff; }
      .all { width: 165px; --field: #e0e0e0; --label-width: 39px; }
      .term { width: 126px; }
      .scroll { flex: 1; margin: 0 2px; background: #fff; border-right: 1px solid #777; border-bottom: 1px solid var(--line); }
      table { width: 100%; border-collapse: separate; border-spacing: 0; table-layout: fixed; border-top: 1px solid #777; border-left: 1px solid #777; }
      th { height: 20px; padding: 2px 0 0; font: 12px/15px var(--wide); background: var(--face); border: 1px solid #777; border-width: 0 1px 1px 0; box-shadow: inset 1px 1px #fff; }
      footer { display: flex; justify-content: flex-end; gap: 8px; padding: 12px 6px 5px; }
      footer .push { min-width: 57px; }
    `;
  }
  markup() {
    return `
      <div class="form">
        <ui-combo class="type" label="Тип" options="Файл"></ui-combo>
        <div class="source"><label for="file">Файл-джерело</label><input id="file" type="text"><button class="push">...</button></div>
        <button class="load" disabled>Завантажити інформацію</button>
        <ui-combo class="base" label="База-приймач" options="dpbase"></ui-combo>
      </div>
      <div class="tools">
        <tool-group>${tools('back forward more')}</tool-group>
        <tool-group>${tools('page edit copy preview del')}</tool-group>
        <hr>
        ${tools('more')}
        <tool-group>${tools('torch caret filter caret')}</tool-group>
        <span class="wide"></span>
        <tool-group><ui-combo class="all" label="Пошук:" options="Все поля"></ui-combo>${tools('eraser')}<ui-combo class="term" bare editable label="Текст пошуку"></ui-combo>${tools('find rows undo hammer')}</tool-group>
      </div>
      <div class="scroll">
        <table>
          <colgroup><col style="width:18px"><col style="width:50px"><col style="width:150px"><col style="width:300px"><col></colgroup>
          <thead><tr><th aria-label="Позначка"></th><th>№</th><th>Джерело</th><th>Приймач</th><th>Примітка</th></tr></thead>
        </table>
      </div>
      <footer><button class="push default">Імпорт</button><button class="push">Скасувати</button></footer>
    `;
  }
}
customElements.define('import-form', ImportForm);

class SideItem extends BaseElement {
  styles() {
    return `
      :host { display: block; }
      button { display: flex; align-items: center; gap: 4px; width: 100%; height: 23px; padding: 0 4px; border: 0; border-bottom: 1px solid #003c94;
        background: linear-gradient(#c6dcfa, #84a8e4); color: #1d467c; font: bold 11px/14px "DejaVu Sans Condensed", "Noto Sans", sans-serif; text-align: left; white-space: nowrap; }
      :host([active]) button { background: linear-gradient(#e8820f, #f8cc70); }
      :host([plain]) button { height: 20px; padding: 0 3px; border: 0; background: none; color: #112; font: 13px/16px var(--wide); }
    `;
  }
  markup() { return `<button><dp-icon name="${this.getAttribute('icon')}"></dp-icon><slot></slot></button>`; }
}
customElements.define('side-item', SideItem);

class SideGroup extends BaseElement {
  styles() {
    return `
      :host { display: block; }
      header { display: flex; align-items: center; gap: 5px; height: 23px; padding: 0 5px 0 6px; background: linear-gradient(90deg, #fff 35%, #c4d2f2); box-shadow: inset 0 1px #fff; }
      h2 { flex: 1; margin: 0; color: #54c01c; font: bold 11px/14px "DejaVu Sans", sans-serif; }
      header button { width: 17px; height: 17px; padding: 0; border: 1px solid #b8c8ec; border-radius: 50%; background: #fff; }
      svg { display: block; margin: auto; }
      .band { height: 8px; box-sizing: border-box; border-bottom: 1px solid #003c94; background: linear-gradient(#5a90e0, #1846a4); display: grid; place-items: center; }
      .band i { width: 36px; height: 2px; background: repeating-linear-gradient(90deg, #fff 0 2px, transparent 2px 4px); }
      .items { border: 1px solid #003c94; border-width: 0 1px; }
      :host([plain]) .band { display: none; }
      :host([plain]) .items { margin-top: 1px; padding: 1px 0; background: #fff; border: 1px solid #b8b8c8; }
    `;
  }
  markup() {
    return `
      <header><dp-icon name="${this.getAttribute('icon')}"></dp-icon><h2>${this.getAttribute('heading')}</h2>
        <button aria-label="Згорнути групу"><svg width="10" height="10"><path d="M2 5l3-3 3 3M2 9l3-3 3 3" fill="none" stroke="#0a2c8c" stroke-width="1.500"/></svg></button></header>
      <div class="band"><i></i></div>
      <div class="items"><slot></slot></div>
    `;
  }
}
customElements.define('side-group', SideGroup);

class SidePane extends BaseElement {
  styles() {
    return `
      :host { display: flex; flex-direction: column; border: 1px solid var(--line); border-radius: 8px 8px 0 0; }
      header { display: flex; height: 22px; border-bottom: 1px solid var(--line); }
      button { border: 0; padding: 0 2px; background: none; font: inherit; color: inherit; display: flex; align-items: center; gap: 3px; }
      .tab { display: grid; width: 119px; }
      .tab > * { grid-area: 1 / 1; }
      .close { margin-left: 12px; }
      .second { width: 79px; padding: 0; border-right: 1px solid var(--line); border-radius: 0 6px 0 0; overflow: hidden; white-space: nowrap; }
      .body { flex: 1; margin: 2px 1px 1px; padding: 7px 9px 8px 8px; display: flex; flex-direction: column; gap: 8px; background: #6d88d2; }
    `;
  }
  markup() {
    return `
      <header>
        <div class="tab">
          <svg width="124" height="22"><path d="M0 22V6Q0 0 6 0H87C102 0 104 20 122 22Z" fill="#f6f6f6"/><path d="M87 0C102 0 104 20 122 22" fill="none" stroke="#a0a0a0"/></svg>
          <button><dp-icon name="logo"></dp-icon>Дебет Пл<svg class="close" width="11" height="11"><path d="M1 1h3l1.500 2L7 1h3v2L8 5.500 10 8v2H7L5.500 8 4 10H1V8l2-2.500L1 3z" fill="#fff" stroke="#777"/></svg></button>
        </div>
        <button class="second"><dp-icon name="admin"></dp-icon>Адміністру</button>
        <pane-buttons></pane-buttons>
      </header>
      <div class="body"><slot></slot></div>
    `;
  }
}
customElements.define('side-pane', SidePane);

class StatusLine extends BaseElement {
  styles() { return ':host { display: flex; align-items: center; height: 31px; padding: 0 7px; gap: 45px; } .right { margin: 0 242px 0 auto; }'; }
  markup() { return '<tool-group><dp-icon name="newView"></dp-icon></tool-group><span><slot></slot></span><tool-group class="right"></tool-group>'; }
}
customElements.define('status-line', StatusLine);

class PlaceItem extends BaseElement {
  styles() {
    return `
      :host { display: block; height: 68px; flex: none; }
      button { width: 100%; height: 100%; border: 1px solid transparent; padding: 3px 0 0; background: none; font: inherit; line-height: 13px; color: inherit; display: flex; flex-direction: column; align-items: center; justify-content: flex-start; gap: 2px; }
      :host([active]) button { border-color: #aaa #eee #eee #aaa; background: linear-gradient(#c0c0c0, #d4d4d4); }
      dp-icon { --size: 32px; }
      span { margin: 0 -4px; }
    `;
  }
  markup() { return `<button><dp-icon name="${this.getAttribute('icon')}" box="32"></dp-icon><span><slot></slot></span></button>`; }
}
customElements.define('place-item', PlaceItem);

class FileEntry extends BaseElement {
  styles() {
    return `
      :host { display: block; height: 17px; }
      button { display: flex; align-items: center; gap: 2px; height: 17px; padding: 0; border: 0; background: none; font: inherit; color: inherit; white-space: nowrap; }
    `;
  }
  markup() { return `<button><dp-icon name="${this.getAttribute('icon') || 'folder'}"></dp-icon><slot></slot></button>`; }
}
customElements.define('file-entry', FileEntry);

class FileDialog extends BaseElement {
  styles() {
    return `${controls}
      :host { display: block; width: 563px; box-sizing: border-box; border: 1px solid #222; border-radius: 7px 7px 0 0; background: #333; padding: 0 3px 3px 2px; }
      header { display: flex; align-items: center; height: 24px; padding: 0 4px; color: #fff; background: linear-gradient(#8a8c90, #505256 45%, #222 50%, #1c1c1e); margin: 0 -3px 0 -2px; border-radius: 6px 6px 0 0; font-weight: bold; }
      h2 { flex: 1; margin: 0; padding-left: 3px; font: inherit; }
      header button { width: 27px; height: 15px; padding: 0; border: 1px solid #999; background: linear-gradient(#888, #333 50%, #555); font: bold 11px/12px var(--wide); color: #fff; }
      header .close { width: 31px; margin-right: 4px; border-color: #c66; background: linear-gradient(#d66, #a00 50%, #c22); }
      .body { background: var(--face); padding: 8px 6px 8px 7px; display: grid; grid-template-columns: 86px minmax(0, 1fr); gap: 7px; }
      .look { grid-column: 1 / 3; display: flex; align-items: center; gap: 7px; margin-left: 51px; }
      .look ui-combo { width: 303px; --label-width: 43px; --indent: 24px; margin-right: 7px; }
      .look tool-button:last-child { margin-left: -6px; }
      .places { display: flex; flex-direction: column; gap: 3px; height: 337px; padding: 1px; box-sizing: border-box; overflow: hidden; background: #f5f5f5; border: 1px solid #fff; text-align: center; }
      .main { display: flex; flex-direction: column; }
      .files { height: 282px; box-sizing: border-box; border: 1px solid #888; border-width: 1px 0 0 1px; background: #fff; padding: 2px 0; display: grid; grid-template-rows: repeat(15, 17px); grid-auto-flow: column; grid-template-columns: 139px 1fr; }
      .fields { display: grid; grid-template-columns: 340px 74px; justify-content: space-between; row-gap: 6px; padding: 11px 1px 0 2px; }
      .fields ui-combo { --label-width: 94px; }
      .types { position: relative; }
      ul { position: absolute; top: 21px; left: 94px; right: 0; margin: 0; padding: 0; list-style: none; border: 1px solid #000; background: #fff; line-height: 13px; z-index: 2; }
      li { padding: 0 3px; }
      li[aria-selected=true] { background: #333; color: #fff; }
      .grow { margin: -2px -4px -8px auto; --size: 10px; }
    `;
  }
  markup() {
    const names = ['Ace Utilities Backups', 'Alcohol 120%', 'Downloads', 'Electronic Arts', 'GF', 'My Games', 'My ISO Files',
      'STDUViewer', 'The KMPlayer', 'Total Overdose', 'Visual Studio 2005', 'Загрузки'];
    return `
      <header><h2>Открыть</h2><button>?</button><button class="close" aria-label="Закрыть"><svg width="9" height="8"><path d="M1 1l7 6M8 1L1 7" stroke="#fff" stroke-width="2"/></svg></button></header>
      <div class="body">
        <div class="look">
          <ui-combo label="Папка:" icon="myDocs" options="Мои документы"></ui-combo>
          ${tools('goBack goUp newFolder views caret')}
        </div>
        <nav class="places">
          <place-item icon="recent">Недавние<br>документы</place-item>
          <place-item icon="desktop">Рабочий стол</place-item>
          <place-item icon="docsBig" active>Мои документы</place-item>
          <place-item icon="pc">Мой<br>компьютер</place-item>
          <place-item icon="network">Сетевое</place-item>
        </nav>
        <div class="main">
          <div class="files">
            ${names.map((n) => `<file-entry>${n}</file-entry>`).join('')}
            <file-entry icon="folderVideo">Мои видеозаписи</file-entry>
            <file-entry icon="folderPics">Мои рисунки</file-entry>
            <file-entry icon="folderMusic">Моя музыка</file-entry>
            <file-entry>Файлы Mail.Ru Агента</file-entry>
          </div>
          <div class="fields">
            <ui-combo editable label="Имя файла:"></ui-combo><button class="push default">Открыть</button>
            <div class="types">
              <ui-combo label="Тип файлов:" options="*.xml|*.mdb"></ui-combo>
              <ul role="listbox" aria-label="Тип файлов"><li role="option" aria-selected="true">*.xml</li><li role="option">*.mdb</li></ul>
            </div>
            <button class="push">Отмена</button>
          </div>
          <dp-icon class="grow" name="dots" box="10"></dp-icon>
        </div>
      </div>
    `;
  }
}
customElements.define('file-dialog', FileDialog);

class TaskButton extends BaseElement {
  styles() {
    return `
      :host { display: block; min-width: 0; }
      button { display: flex; align-items: center; gap: 4px; width: 100%; height: 22px; padding: 0 7px; border: 1px solid #666; border-color: #777 #444 #333 #777; font: inherit; color: #fff; background: linear-gradient(#66686c, #3c3e42 50%, #101010 50%, #2a2a2c); }
      :host([active]) button { background: #0a0a0a; }
      span { overflow: hidden; text-overflow: ellipsis; white-space: nowrap; }
    `;
  }
  markup() { return `<button><dp-icon name="${this.getAttribute('icon')}"></dp-icon><span><slot></slot></span></button>`; }
}
customElements.define('task-button', TaskButton);

class TaskBar extends BaseElement {
  styles() {
    return `
      :host { display: flex; height: 52px; box-sizing: border-box; border-top: 1px solid #555; color: #fff; background: linear-gradient(#85878c, #4c4e52 23px, #26272a 24px, #000); }
      .start { width: 37px; height: 24px; padding: 0 0 0 8px; border: 1px solid #7c2c04; border-radius: 0 4px 4px 0; background: linear-gradient(#f09048, #c84c0c 50%, #a83400 50%, #e07020); }
      .start dp-icon { --size: 18px; }
      .quick { display: grid; grid-template: 24px 24px / repeat(3, 16px) 12px; gap: 2px 9px; align-items: center; margin-left: 9px; }
      .tasks { display: grid; grid-template: 22px 22px / repeat(6, minmax(0, 157px)); gap: 4px 3px; margin: 1px auto 0 5px; flex: 0 1 957px; }
      .lang { align-self: center; background: #333; padding: 0 1px; margin-right: 29px; font-size: 10px; }
      .tray { display: grid; grid-template: 16px 16px / repeat(6, 16px); gap: 3px 2px; align-content: center; margin-right: 9px; }
      time { display: grid; grid-template-columns: 22px 18px; align-content: center; width: 44px; margin-right: 9px; color: #1cd848; font: 20px/11px "DejaVu Sans Condensed", sans-serif; }
      time b { grid-row: 1 / 3; font-weight: normal; line-height: 24px; }
      time span { font-size: 12px; line-height: 11px; }
      time .min { font-weight: bold; }
    `;
  }
  markup() {
    return `
      <button class="start" aria-label="Пуск"><dp-icon name="start"></dp-icon></button>
      <div class="quick">${tools('winamp firefox showDesk more phone onec deskMini')}</div>
      <div class="tasks">
        <task-button icon="firefox">Дебет Плюс • Новая ...</task-button>
        <task-button icon="onec">1С:Предприятие - О...</task-button>
        <task-button icon="logo" active>Дебет Плюс - Склад ...</task-button>
        <task-button icon="folderYellow">Видео</task-button>
        <task-button icon="rar">Импорт информации ...</task-button>
        <task-button icon="excel">Інформація з 1С</task-button>
        <task-button icon="excel">Лист Microsoft Office ...</task-button>
      </div>
      <span class="lang">UK</span>
      <div class="tray">${tools('kmp shieldY shieldR play okGreen agent sound clover flag netOff flash')}</div>
      <time><b>11</b><span class="min">56</span><span>02</span></time>
    `;
  }
}
customElements.define('task-bar', TaskBar);

class AppShell extends BaseElement {
  styles() {
    return `
      :host { display: flex; flex-direction: column; position: relative; }
      main { flex: 1; display: grid; grid-template-columns: minmax(0, 1fr) 254px; gap: 4px; padding: 0 4px 0 5px; }
      file-dialog { position: absolute; left: 236px; top: 295px; }
    `;
  }
  markup() {
    const items = (list) => list.map(([icon, text, extra = '']) => `<side-item icon="${icon}" ${extra}>${text}</side-item>`).join('');
    return `
      <title-bar>Дебет Плюс - Склад (Ковель) - Адміністрування</title-bar>
      <menu-bar></menu-bar>
      <main-toolbar></main-toolbar>
      <main>
        <editor-pane><import-form></import-form></editor-pane>
        <side-pane>
          <side-group plain icon="bases" heading="Бази даних">${items([['db', 'База DERBY', 'plain'], ['dbArrow', 'База MySQL', 'plain']])}</side-group>
          <side-group icon="orgs" heading="Організації">${items([['diamond', 'Склад (Ковель)', 'active']])}</side-group>
          <side-group icon="gears" heading="Системи">${items([
            ['cabinet', 'Облік ТМЦ'], ['chart', 'Зведення бух. балансу'], ['money', 'Облік банківських операцій'],
            ['bag', 'Облік касових операцій'], ['assets', 'Облік основних засобів'], ['salary', 'Облік заробітної плати'],
            ['staff', 'Облік кадрів'], ['calendar', 'Управлінський облік'], ['admin', 'Адміністрування', 'active'],
            ['crm', 'CRM'], ['truck', 'Автотранспорт']])}</side-group>
          <side-group icon="help" heading="Довідка">${items([
            ['note', 'Довідка по Дебет Плюс V12'], ['film', 'Відеоролики'], ['docHelp', 'Документація'],
            ['search', 'Знайти у довідці'], ['globe', 'Відвідати Web-сайт'], ['info', 'Про програму']])}</side-group>
        </side-pane>
      </main>
      <status-line>Не вірно вказаний файл-джерело</status-line>
      <task-bar></task-bar>
      <file-dialog></file-dialog>
    `;
  }
}
customElements.define('app-shell', AppShell);
</script>
</body>
</html>
